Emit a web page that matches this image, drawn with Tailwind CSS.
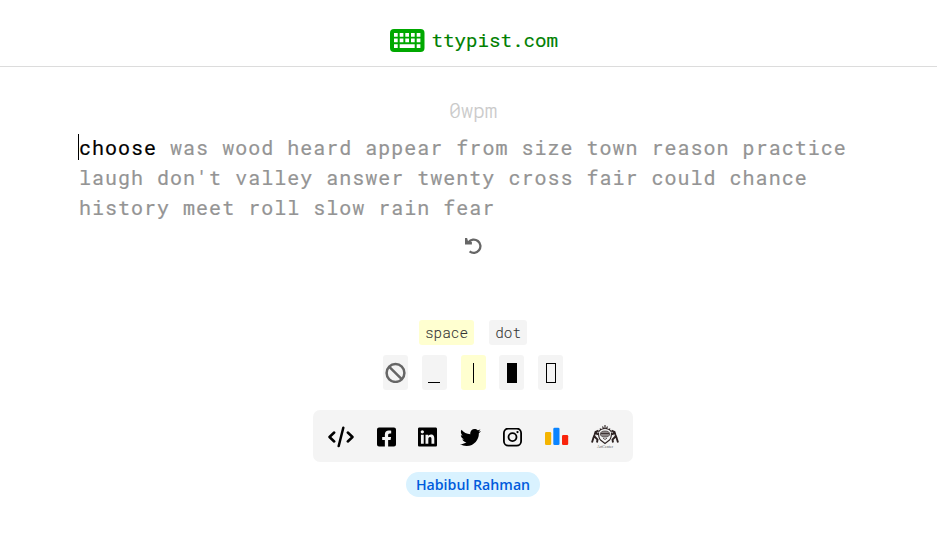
<!DOCTYPE html>
<html lang="en">
<head>
<meta charset="utf-8">
<title>ttypist.com</title>
<script src="https://cdn.jsdelivr.net/npm/@tailwindcss/browser@4"></script>
</head>
<body class="h-[533px] overflow-hidden bg-white font-['Roboto_Mono','Liberation_Mono',monospace] text-black antialiased">
<header class="flex h-[67px] items-start justify-center border-b border-[#dcdcdc] pl-[11px] pt-[27px]">
  <a class="flex items-center gap-[6.5px] text-[#008000]">
    <svg class="mt-[2px] h-[23px] w-[35px]" viewBox="0 0 35 23">
      <rect width="34.5" height="23" rx="4" fill="#00a800"/>
      <g fill="#fff">
        <path d="M4 4h3.700v3.700H4zM9.700 4h3.700v3.700H9.700zM15.300 4h3.700v3.700h-3.700zM21 4h3.700v3.700H21zM26.700 4h3.700v3.700h-3.700z"/>
        <path d="M4 9.500h3.700v3.700H4zM9.700 9.500h3.700v3.700H9.700zM15.300 9.500h3.700v3.700h-3.700zM21 9.500h3.700v3.700H21zM26.700 9.500h3.700v3.700h-3.700z"/>
        <path d="M4 15.200h3.700v3.700H4zM9.700 15.200h15v3.700h-15zM26.700 15.200h3.700v3.700h-3.700z"/>
      </g>
    </svg>
    <span class="text-[19.2px] leading-[25px] [-webkit-text-stroke:0.15px]">ttypist.com</span>
  </a>
</header>
<main class="flex flex-col items-center pl-[9px]">
  <div class="mt-[30px] h-[26px] text-[20px] font-light leading-[26px] text-[#c8c8c8] [-webkit-text-stroke:0.2px]">0wpm</div>
  <div class="mt-[9px] flex w-[790px] text-[20px] leading-[30px] tracking-[1.01px] text-[#949494] [-webkit-text-stroke:0.2px]">
    <span class="mt-[2px] h-[26px] w-px shrink-0 bg-black"></span>
    <p class="whitespace-nowrap"><span class="text-black">choose</span> was wood heard appear from size town reason practice<br>laugh don't valley answer twenty cross fair could chance<br>history meet roll slow rain fear</p>
  </div>
  <svg class="mt-[15px] h-[17px] w-[17px]" viewBox="0 0 17 17" fill="none" stroke="#666" stroke-width="2.300">
    <path d="M3.500 5.300A6.600 6.600 0 1 1 4.600 14.300"/>
    <path d="M0 1.100H2.100L3 3.900L6.900 5.100V7.400H0Z" fill="#666" stroke="none"/>
  </svg>
  <div class="mt-[66px] flex gap-[15px] text-[14.4px] font-light leading-[25px] text-[#333] [-webkit-text-stroke:0.1px]">
    <span class="h-[25px] rounded-[3px] bg-[#ffffd0] px-[6px]">space</span>
    <span class="h-[25px] rounded-[3px] bg-[#f4f4f4] px-[6px]">dot</span>
  </div>
  <div class="mt-[10px] flex gap-[14px]">
    <span class="flex h-[35px] w-[25px] items-center justify-center rounded-[3px] bg-[#f4f4f4]">
      <svg class="h-[21px] w-[21px]" viewBox="0 0 21 21" fill="none" stroke="#666" stroke-width="2.500"><circle cx="10.500" cy="11" r="8.900"/><path d="M4.300 4.800L16.700 17.200"/></svg>
    </span>
    <span class="flex h-[35px] w-[25px] items-end justify-center rounded-[3px] bg-[#f4f4f4] pb-[7px] pr-px"><i class="h-px w-[12px] bg-black"></i></span>
    <span class="flex h-[35px] w-[25px] items-center justify-center rounded-[3px] bg-[#ffffd0]"><i class="h-[20px] w-px bg-black"></i></span>
    <span class="-ml-px flex h-[35px] w-[25px] items-center justify-center rounded-[3px] bg-[#f4f4f4]"><i class="h-[20px] w-[10px] bg-black"></i></span>
    <span class="flex h-[35px] w-[25px] items-center justify-center rounded-[3px] bg-[#f4f4f4]"><i class="h-[20px] w-[10px] border border-black"></i></span>
  </div>
  <nav class="mt-[20px] flex h-[52px] w-[320px] items-center justify-between rounded-[7px] bg-[#f4f4f4] pl-[15px] pr-[14px] pt-[2px]">
    <svg class="h-[22px] w-[26px]" viewBox="0 0 26 22" fill="none" stroke="#000" stroke-width="2.500" stroke-linecap="round" stroke-linejoin="round"><path d="M6.200 6.500L1.500 11L6.200 15.500M19.800 6.500L24.500 11L19.800 15.500M15.300 1.800L10.700 20"/></svg>
    <svg class="h-[22px] w-[19px]" viewBox="0 0 448 512"><path d="M400 32H48A48 48 0 0 0 0 80v352a48 48 0 0 0 48 48h137.250V327.690h-63V256h63v-54.640c0-62.150 37-96.480 93.670-96.480 27.140 0 55.520 4.840 55.520 4.840v61h-31.270c-30.810 0-40.420 19.120-40.420 38.730V256h68.780l-11 71.690h-57.780V480H400a48 48 0 0 0 48-48V80a48 48 0 0 0-48-48z"/></svg>
    <svg class="h-[22px] w-[19px]" viewBox="0 0 448 512"><path d="M416 32H31.900C14.300 32 0 46.500 0 64.300v383.400C0 465.500 14.300 480 31.900 480H416c17.600 0 32-14.500 32-32.300V64.300c0-17.800-14.400-32.300-32-32.300zM135.400 416H69V202.200h66.500V416zm-33.200-243c-21.300 0-38.500-17.300-38.500-38.500S80.900 96 102.200 96c21.200 0 38.500 17.300 38.500 38.500 0 21.300-17.200 38.500-38.500 38.500zm282.100 243h-66.400V312c0-24.800-.5-56.700-34.500-56.700-34.600 0-39.900 27-39.900 54.900V416h-66.400V202.200h63.700v29.200h.9c8.900-16.800 30.600-34.500 62.900-34.500 67.200 0 79.700 44.300 79.700 101.900V416z"/></svg>
    <svg class="h-[21px] w-[21px]" viewBox="0 0 512 512"><path d="M459.370 151.716c.325 4.548.325 9.097.325 13.645 0 138.720-105.583 298.558-298.558 298.558-59.452 0-114.680-17.219-161.137-47.106 8.447.974 16.568 1.299 25.340 1.299 49.055 0 94.213-16.568 130.274-44.832-46.132-.975-84.792-31.188-98.112-72.772 6.498.974 12.995 1.624 19.818 1.624 9.421 0 18.843-1.300 27.614-3.573-48.081-9.747-84.143-51.980-84.143-102.985v-1.299c13.969 7.797 30.214 12.670 47.431 13.319-28.264-18.843-46.781-51.005-46.781-87.391 0-19.492 5.197-37.360 14.294-52.954 51.655 63.675 129.300 105.258 216.365 109.807-1.624-7.797-2.599-15.918-2.599-24.040 0-57.828 46.782-104.934 104.934-104.934 30.213 0 57.502 12.670 76.670 33.137 23.715-4.548 46.456-13.320 66.599-25.340-7.798 24.366-24.366 44.833-46.132 57.827 21.117-2.273 41.584-8.122 60.426-16.243-14.292 20.791-32.161 39.308-52.628 54.253z"/></svg>
    <svg class="h-[19px] w-[19px]" viewBox="0 0 19 19" fill="none" stroke="#000" stroke-width="1.800"><rect x=".9" y=".5" width="17.200" height="17.200" rx="4.500"/><circle cx="9.500" cy="9.100" r="4"/><circle cx="14.500" cy="4.100" r="1.150" fill="#000" stroke="none"/></svg>
    <svg class="h-[20px] w-[24px]" viewBox="0 0 24 20"><rect x="0" y="5" width="6.200" height="13" rx="1.300" fill="#f4b400"/><rect x="8.300" y=".8" width="6.200" height="17.200" rx="1.300" fill="#0a84ff"/><rect x="17" y="8" width="6.200" height="10" rx="1.300" fill="#f9230b"/></svg>
    <svg class="h-[26px] w-[28px]" viewBox="0 0 28 26" fill="none" stroke="#2b2020" stroke-width="1.100">
      <path d="M7.500 8.500Q7.500 14 9.500 16L14 19.500L18.500 16Q20.500 14 20.500 8.500"/>
      <path d="M7.500 8Q10 4.500 14 4.500Q18 4.500 20.500 8M14 1V4.500M11.500 2.500L12.500 4.500M16.500 2.500L15.500 4.500M9 4.500L10 6M19 4.500L18 6"/>
      <ellipse cx="14" cy="10" rx="4.600" ry="3" fill="#8a8484" stroke="#4b4444" stroke-width=".8"/>
      <path d="M10 9.500H18M12 14L14 15.500L16 14" stroke-width=".8"/>
      <path d="M7.500 6.500L4.500 8L3.500 11L2.500 13.500L1 18.500M3.500 12.500L6.500 15.500L6 18.500M5.500 8.500L6.500 11M20.500 6.500L23.500 8L24.500 11L25.500 13.500L27 18.500M24.500 12.500L21.500 15.500L22 18.500M22.500 8.500L21.500 11" stroke-width="1.900"/>
      <text x="14" y="24" text-anchor="middle" font-family="Liberation Serif, serif" font-size="4" fill="#555" stroke="none">ArtCenter</text>
    </svg>
  </nav>
  <a class="mt-[10px] h-[25px] rounded-full bg-[#d9f2ff] px-[10px] font-['Open_Sans','Noto_Sans',sans-serif] text-[14.2px] font-semibold leading-[25px] text-[#005bdc]">Habibul Rahman</a>
</main>
</body>
</html>
